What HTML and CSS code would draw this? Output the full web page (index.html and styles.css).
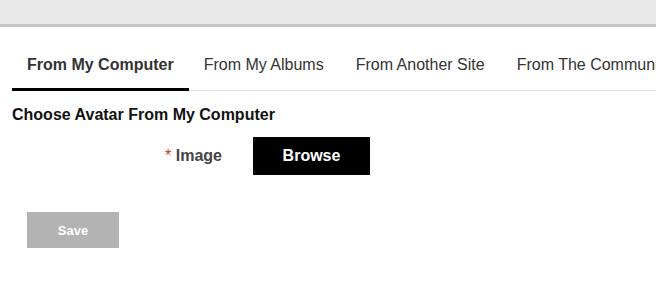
FILE: index.html
```html
<!DOCTYPE html>
<html lang="en">

<head>
  <meta charset="UTF-8" />
  <title>Choose Avatar</title>
  <link rel="stylesheet" href="styles.css">
</head>

<body>
  <div class="topbar"></div>

  <ul class="tabs">
    <li class="tab active">From My Computer</li>
    <li class="tab">From My Albums</li>
    <li class="tab">From Another Site</li>
    <li class="tab">From The Community</li>
  </ul>

  <h3 class="heading">Choose Avatar From My Computer</h3>

  <div class="field">
    <label class="label"><span class="req">*</span> Image</label>
    <button class="browse">Browse</button>
  </div>

  <button class="save">Save</button>
</body>

</html>
```

FILE: styles.css
```css
body {
  margin: 0;
  font-family: "Liberation Sans", Arial, sans-serif;
  color: #333;
  background: #fff;
  overflow: hidden;
}

.topbar {
  height: 24px;
  background: #e8e8e8;
  border-bottom: 3px solid #c4c4c4;
}

.tabs {
  list-style: none;
  margin: 28px 0 0 12px;
  padding: 0;
  display: flex;
  white-space: nowrap;
  border-bottom: 1px solid #dfe3e3;
}

.tab {
  font-size: 16px;
  line-height: 20px;
  padding: 0 15px 13px;
  margin-bottom: -1px;
  border-bottom: 3px solid transparent;
  color: #333;
  flex-shrink: 0;
}

.tab + .tab {
  padding-right: 17px;
}

.tab.active {
  font-weight: bold;
  border-bottom-color: #000;
}

.heading {
  margin: 15px 0 0 12px;
  font-size: 16px;
  line-height: 18px;
  font-weight: bold;
  color: #111;
}

.field {
  display: flex;
  align-items: center;
  gap: 31px;
  margin: 13px 0 0 12px;
}

.label {
  width: 210px;
  text-align: right;
  font-size: 16px;
  font-weight: bold;
  color: #444;
}

.req {
  color: #c0392b;
  font-weight: normal;
}

.browse {
  width: 117px;
  height: 38px;
  border: 0;
  background: #000;
  color: #fff;
  font-family: inherit;
  font-size: 16px;
  font-weight: bold;
  padding: 0;
}

.save {
  display: block;
  margin: 37px 0 0 27px;
  width: 92px;
  height: 36px;
  border: 0;
  background: #b3b3b3;
  color: #fff;
  font-family: inherit;
  font-size: 13px;
  font-weight: bold;
  padding: 0;
}
```
